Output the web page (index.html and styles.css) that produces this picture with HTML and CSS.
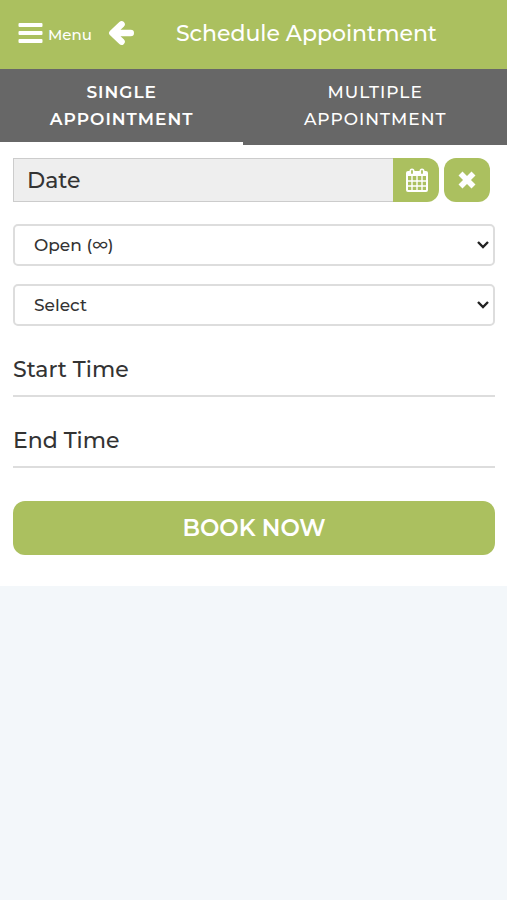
FILE: index.html
```html
<!DOCTYPE html>
<html lang="en">
<head>
  <meta charset="utf-8">
  <meta name="viewport" content="width=device-width, initial-scale=1">
  <title>Schedule Appointment</title>
  <link rel="stylesheet" href="styles.css">
</head>
<body>
  <header class="topbar">
    <button class="menu" type="button">
      <svg class="menu-icon" viewBox="0 0 24 20" aria-hidden="true">
        <rect width="24" height="4" rx="1"/>
        <rect y="8" width="24" height="4" rx="1"/>
        <rect y="16" width="24" height="4" rx="1"/>
      </svg>
      <span>Menu</span>
    </button>
    <a class="back" href="#" aria-label="Back">
      <svg class="back-icon" viewBox="0 0 24 24" aria-hidden="true">
        <path d="M12.5 4 4 12l8.5 8M5 12h16"/>
      </svg>
    </a>
    <h1 class="title">Schedule Appointment</h1>
  </header>

  <nav class="tabs">
    <a class="tab tab-active" href="#" aria-current="page">Single<br>Appointment</a>
    <a class="tab" href="#">Multiple<br>Appointment</a>
  </nav>

  <main>
    <form class="form">
      <div class="date-row">
        <input class="date" type="text" placeholder="Date" aria-label="Date" readonly>
        <button class="icon-button calendar" type="button" aria-label="Pick a date">
          <svg class="calendar-icon" viewBox="0 0 22 24" aria-hidden="true">
            <rect x="1" y="4" width="20" height="19" rx="1" fill="none" stroke="#fff" stroke-width="2"/>
            <path d="M1 4h20v4H1z" fill="#fff"/>
            <path d="M6 8v15M11 8v15M16 8v15M1 13h20M1 18h20" stroke="#fff" stroke-width="1.4"/>
            <path d="M6 3v2M16 3v2" stroke="#fff" stroke-width="5" stroke-linecap="round"/>
            <path d="M6 3v2M16 3v2" stroke="#abc05f" stroke-width="1.8" stroke-linecap="round"/>
          </svg>
        </button>
        <button class="icon-button clear" type="button" aria-label="Clear date">
          <svg class="clear-icon" viewBox="0 0 16 16" aria-hidden="true">
            <path d="m4 4 8 8M12 4l-8 8"/>
          </svg>
        </button>
      </div>

      <div class="select-box">
        <select class="select" aria-label="Availability">
          <option>Open (∞)</option>
        </select>
        <svg class="chevron" viewBox="0 0 12 8" aria-hidden="true"><path d="m1 1 5 5 5-5"/></svg>
      </div>
      <div class="select-box">
        <select class="select" aria-label="Service">
          <option>Select</option>
        </select>
        <svg class="chevron" viewBox="0 0 12 8" aria-hidden="true"><path d="m1 1 5 5 5-5"/></svg>
      </div>

      <input class="time" type="text" placeholder="Start Time" aria-label="Start Time">
      <input class="time" type="text" placeholder="End Time" aria-label="End Time">

      <button class="book" type="submit">Book Now</button>
    </form>
  </main>
</body>
</html>
```

FILE: styles.css
```css
* {
  box-sizing: border-box;
}

body {
  margin: 0;
  background: #f3f7fa;
  color: #333;
  font-family: Montserrat, Inter, sans-serif;
  font-weight: 500;
}

button,
input,
select {
  margin: 0;
  font-family: inherit;
  font-weight: inherit;
  color: inherit;
}

button {
  border: 0;
  padding: 0;
  cursor: pointer;
}

a {
  color: inherit;
  text-decoration: none;
}

svg {
  display: block;
}

.topbar {
  display: flex;
  align-items: center;
  height: 69px;
  padding: 0 18px 3px;
  background: #abc05f;
  color: #fff;
}

.menu {
  display: flex;
  align-items: center;
  gap: 5px;
  background: none;
  font-size: 15px;
  line-height: 20px;
}

.menu span {
  padding-top: 4px;
}

.menu-icon {
  width: 25px;
  height: 20px;
  fill: #fff;
}

.back {
  margin-left: 16px;
}

.back-icon {
  width: 26px;
  height: 26px;
  fill: none;
  stroke: #fff;
  stroke-width: 6;
  stroke-linecap: round;
  stroke-linejoin: round;
}

.title {
  flex: 1;
  margin: 0;
  padding: 2px 18px 0 8px;
  font-size: 22px;
  font-weight: 500;
  line-height: 32px;
  text-align: center;
}

.tabs {
  display: grid;
  grid-template-columns: 12fr 13fr;
  background: #676767;
  color: #fff;
}

.tab {
  padding: 10px 0 9px;
  border-bottom: 3px solid transparent;
  font-size: 17px;
  line-height: 27px;
  letter-spacing: 1px;
  text-align: center;
  text-transform: uppercase;
}

.tab-active {
  border-bottom-color: #fff;
  font-weight: 600;
}

.form {
  display: flex;
  flex-direction: column;
  padding: 13px 12px 31px 13px;
  background: #fff;
}

.date-row {
  display: flex;
  height: 44px;
  margin-bottom: 22px;
  padding-right: 5px;
}

.date {
  flex: 1;
  min-width: 0;
  padding: 0 13px;
  border: 1px solid #ccc;
  border-right: 0;
  border-radius: 0;
  background: #eee;
  font-size: 22px;
}

.date::placeholder,
.time::placeholder {
  color: #333;
  opacity: 1;
}

.icon-button {
  display: grid;
  place-items: center;
  width: 46px;
  background: #abc05f;
}

.calendar {
  padding-left: 2px;
  border-radius: 0 12px 12px 0;
}

.calendar-icon {
  width: 22px;
  height: 24px;
}

.clear {
  margin-left: 5px;
  border-radius: 12px;
}

.clear-icon {
  width: 18px;
  height: 18px;
  fill: none;
  stroke: #fff;
  stroke-width: 5;
  stroke-linecap: square;
  stroke-linejoin: round;
}

.select-box {
  display: grid;
  align-items: center;
  margin-bottom: 18px;
}

.select,
.chevron {
  grid-area: 1 / 1;
}

.select {
  width: 100%;
  height: 42px;
  padding: 0 32px 0 19px;
  border: 2px solid #ddd;
  border-radius: 5px;
  background: #fff;
  font-size: 17px;
  appearance: none;
}

.chevron {
  justify-self: end;
  width: 12px;
  height: 8px;
  margin-right: 6px;
  fill: none;
  stroke: #222;
  stroke-width: 2.4;
  pointer-events: none;
}

.time {
  width: 100%;
  height: 53px;
  margin-bottom: 18px;
  padding: 0;
  border: 0;
  border-bottom: 2px solid #ddd;
  background: none;
  font-size: 22px;
}

.book {
  height: 54px;
  margin-top: 15px;
  border-radius: 12px;
  background: #abc05f;
  color: #fff;
  font-size: 23px;
  font-weight: 600;
  text-transform: uppercase;
}
```
